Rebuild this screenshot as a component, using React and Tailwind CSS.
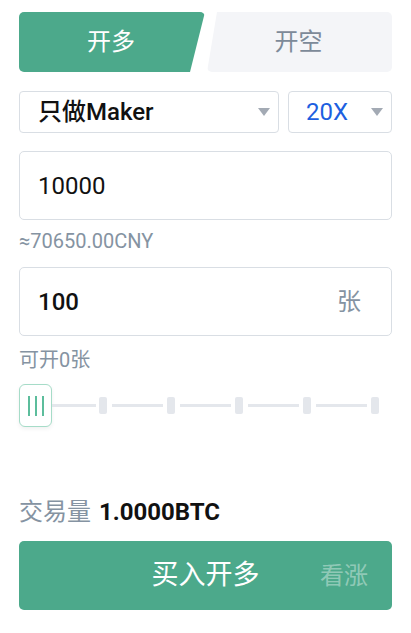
import React from 'react';

const font = "font-['Roboto','Noto_Sans_CJK_SC',sans-serif]";

const Caret = () => (
  <svg width="12" height="8" viewBox="0 0 12 8" className="shrink-0">
    <path d="M0 0 H12 L6 8 Z" fill="#a3aab4" />
  </svg>
);

const Tick = () => <div className="w-2 h-[17px] rounded-[2px] bg-[#e4e7ec] shrink-0" />;

const App = () => {
  return (
    <div className={`w-[411px] h-[633px] bg-white ${font} px-[19px] pt-[12px]`}>
      {/* tabs */}
      <div className="flex h-[60px] gap-[2px]">
        <div className="w-[186px] h-full rounded-[5px] bg-[#4ca98b] [clip-path:polygon(0_0,100%_0,calc(100%-15px)_100%,0_100%)] flex items-center justify-center pr-[2px]">
          <span className="text-white text-[24px]">开多</span>
        </div>
        <div className="flex-1 h-full rounded-[5px] bg-[#f4f5f8] [clip-path:polygon(10px_0,100%_0,100%_100%,0_100%)] flex items-center justify-center pr-[2px]">
          <span className="text-[#7d8a99] text-[24px]">开空</span>
        </div>
      </div>

      {/* selects */}
      <div className="flex gap-[9px] mt-[19px]">
        <div className="w-[260px] h-[42px] border border-[#d9dee4] rounded-[4px] flex items-center justify-between pl-[18px] pr-[8px]">
          <span className="text-[24px] text-[#111] font-medium">只做Maker</span>
          <Caret />
        </div>
        <div className="flex-1 h-[42px] border border-[#d9dee4] rounded-[4px] flex items-center justify-between pl-[17px] pr-[8px]">
          <span className="text-[24px] text-[#1d5fe0]">20X</span>
          <Caret />
        </div>
      </div>

      {/* price input */}
      <div className="mt-[18px] h-[69px] border border-[#d9dee4] rounded-[5px] flex items-center pl-[18px]">
        <span className="text-[24px] text-[#111]">10000</span>
      </div>
      <div className="mt-[9px] text-[20px] leading-[24px] text-[#8593a2]">≈70650.00CNY</div>

      {/* amount input */}
      <div className="mt-[14px] h-[69px] border border-[#d9dee4] rounded-[5px] flex items-center justify-between pl-[18px] pr-[30px]">
        <span className="text-[24px] text-[#111] font-medium">100</span>
        <span className="text-[24px] text-[#8593a2]">张</span>
      </div>
      <div className="mt-[12px] text-[20px] leading-[24px] text-[#8593a2]">可开0张</div>

      {/* slider */}
      <div className="mt-[12px] flex items-center h-[43px]">
        <div className="w-[33px] h-[43px] shrink-0 rounded-[6px] border border-[#a6dcc8] bg-white shadow-[0_2px_4px_rgba(0,0,0,0.06)] flex items-center justify-center gap-[5px]">
          <div className="w-[2px] h-[20px] bg-[#5cbd9c]" />
          <div className="w-[2px] h-[20px] bg-[#5cbd9c]" />
          <div className="w-[2px] h-[20px] bg-[#5cbd9c]" />
        </div>
        <div className="w-[44px] h-[3px] bg-[#e4e7ec] mr-[3px]" />
        <Tick />
        <div className="w-[51px] h-[3px] bg-[#e4e7ec] ml-[5px] mr-[4px]" />
        <Tick />
        <div className="w-[51px] h-[3px] bg-[#e4e7ec] ml-[5px] mr-[4px]" />
        <Tick />
        <div className="w-[51px] h-[3px] bg-[#e4e7ec] ml-[5px] mr-[4px]" />
        <Tick />
        <div className="w-[51px] h-[3px] bg-[#e4e7ec] ml-[5px] mr-[4px]" />
        <Tick />
      </div>

      {/* volume */}
      <div className="mt-[71px] flex items-center gap-[8px] text-[24px] leading-[28px]">
        <span className="text-[#8593a2]">交易量</span>
        <span className="text-[#111] font-bold">1.0000BTC</span>
      </div>

      {/* submit */}
      <div className="relative mt-[15px] h-[69px] rounded-[5px] bg-[#4ca98b] flex items-center justify-center">
        <span className="text-white text-[27px]">买入开多</span>
        <span className="absolute right-[24px] text-[24px] text-white/40">看涨</span>
      </div>
    </div>
  );
};

export default App;
